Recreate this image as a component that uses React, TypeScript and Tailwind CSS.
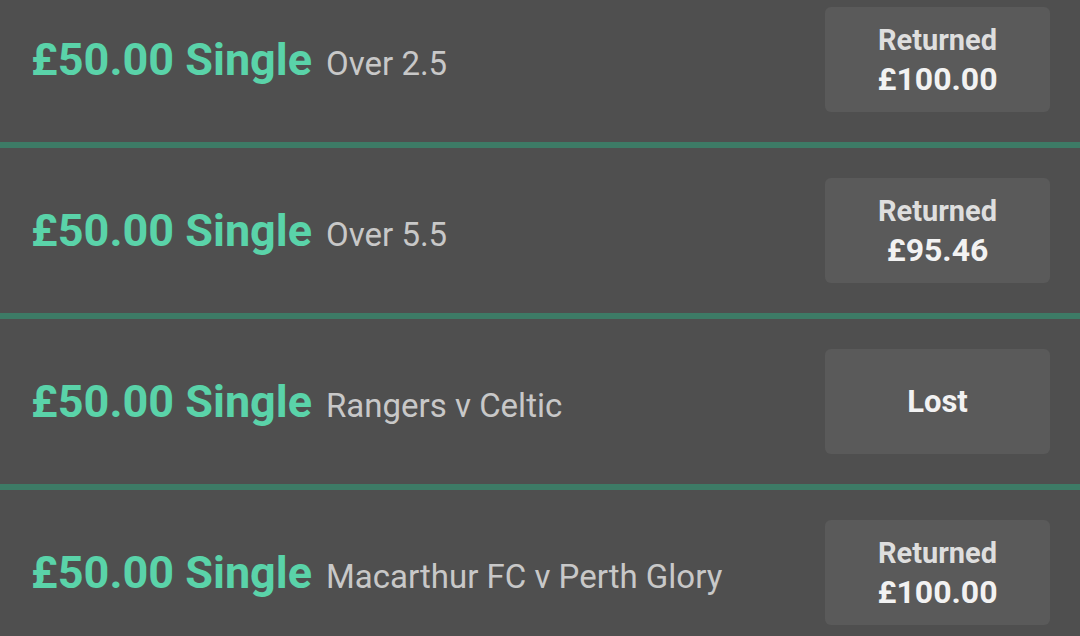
type Bet = {
  stake: string;
  market: string;
  status: string;
  amount?: string;
};

const bets: Bet[] = [
  { stake: '£50.00', market: 'Over 2.5', status: 'Returned', amount: '£100.00' },
  { stake: '£50.00', market: 'Over 5.5', status: 'Returned', amount: '£95.46' },
  { stake: '£50.00', market: 'Rangers v Celtic', status: 'Lost' },
  { stake: '£50.00', market: 'Macarthur FC v Perth Glory', status: 'Returned', amount: '£100.00' },
];

function BetRow({ bet }: { bet: Bet }) {
  return (
    <div className="flex h-[165px] items-center justify-between pl-[31px] pr-[30px]">
      <div className="flex items-baseline">
        <span className="text-[45px] font-bold leading-none text-[#5ad3a9]">
          {bet.stake} Single
        </span>
        <span className="ml-[14px] text-[33px] leading-none text-[#c8c8c8]">{bet.market}</span>
      </div>
      <div className="flex h-[105px] w-[225px] flex-col items-center justify-center rounded-[6px] bg-[#5a5a5a]">
        {bet.amount ? (
          <>
            <span className="text-[29px] font-bold leading-[39px] text-[#dedede]">{bet.status}</span>
            <span className="text-[32px] font-bold leading-[38px] text-[#f2f2f2]">{bet.amount}</span>
          </>
        ) : (
          <span className="text-[31px] font-bold leading-none text-[#f2f2f2]">{bet.status}</span>
        )}
      </div>
    </div>
  );
}

export default function App() {
  return (
    <div
      className="h-[636px] w-[1080px] overflow-hidden bg-[#4f4f4f]"
      style={{ fontFamily: 'Roboto, "Noto Sans", sans-serif' }}
    >
      {/* settled bets list, scrolled a little past the first row's top */}
      <div className="-mt-[23px]">
        {bets.map((bet, i) => (
          <div key={i}>
            <BetRow bet={bet} />
            {i < bets.length - 1 && <div className="h-[6px] bg-[#3d7b66]" />}
          </div>
        ))}
      </div>
    </div>
  );
}
